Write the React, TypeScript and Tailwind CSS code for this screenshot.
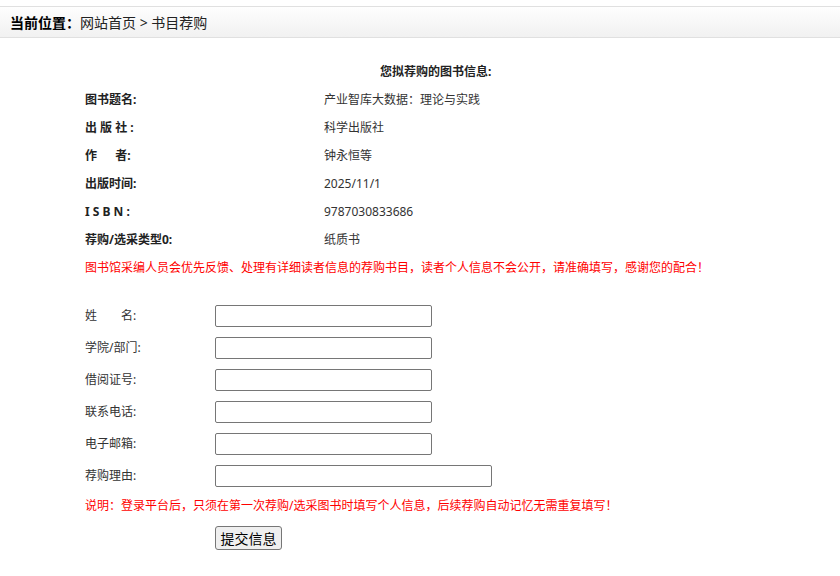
const font = { fontFamily: '"Noto Sans", "Noto Sans CJK SC", sans-serif' }

const bookInfo = [
	{ label: '图书题名:', value: '产业智库大数据：理论与实践' },
	{ label: '出 版 社 :', value: '科学出版社' },
	{ label: '作　  者:', value: '钟永恒等' },
	{ label: '出版时间:', value: '2025/11/1' },
	{ label: 'I S B N :', value: '9787030833686' },
	{ label: '荐购/选采类型0:', value: '纸质书' },
]

const fields = [
	{ label: '姓　　名:', wide: false },
	{ label: '学院/部门:', wide: false },
	{ label: '借阅证号:', wide: false },
	{ label: '联系电话:', wide: false },
	{ label: '电子邮箱:', wide: false },
	{ label: '荐购理由:', wide: true },
]

export default function App() {
	return (
		<div className="w-[840px] h-[576px] bg-white text-[12px] text-[#333]" style={font}>
			<div className="pt-[6px]">
				<div className="h-[32px] flex items-center pl-[10px] border-y border-[#e0e0e0] bg-gradient-to-b from-[#fefefe] to-[#f1f1f1] text-[14px]">
					<span className="font-bold text-black">当前位置：</span>
					<span className="text-[#222] whitespace-pre">网站首页 &gt; 书目荐购</span>
				</div>
			</div>

			<div className="pt-[20px] pl-[85px]">
				<div className="h-[28px] flex items-center pl-[295px] font-bold text-[#222]">
					您拟荐购的图书信息:
				</div>
				{bookInfo.map((row) => (
					<div key={row.label} className="h-[28px] flex items-center">
						<span className="w-[239px] font-bold text-[#222] whitespace-pre">{row.label}</span>
						<span>{row.value}</span>
					</div>
				))}
				<div className="h-[28px] flex items-center text-[#ff0000]">
					图书馆采编人员会优先反馈、处理有详细读者信息的荐购书目，读者个人信息不会公开，请准确填写，感谢您的配合！
				</div>

				<div className="pt-[18px]">
					{fields.map((f) => (
						<div key={f.label} className="h-[32px] flex items-center">
							<span className="w-[130px] whitespace-pre">{f.label}</span>
							<input
								type="text"
								className={`h-[22px] border border-[#767676] rounded-[2px] bg-white ${f.wide ? 'w-[277px]' : 'w-[217px]'}`}
							/>
						</div>
					))}
				</div>

				<div className="h-[28px] flex items-center text-[#ff0000]">
					说明：登录平台后，只须在第一次荐购/选采图书时填写个人信息，后续荐购自动记忆无需重复填写！
				</div>

				<div className="pt-[6px] pl-[130px]">
					<button
						type="button"
						className="w-[67px] h-[24px] border border-[#767676] rounded-[3px] bg-[#efefef] text-[14px] text-black flex items-center justify-center"
					>
						提交信息
					</button>
				</div>
			</div>
		</div>
	)
}
